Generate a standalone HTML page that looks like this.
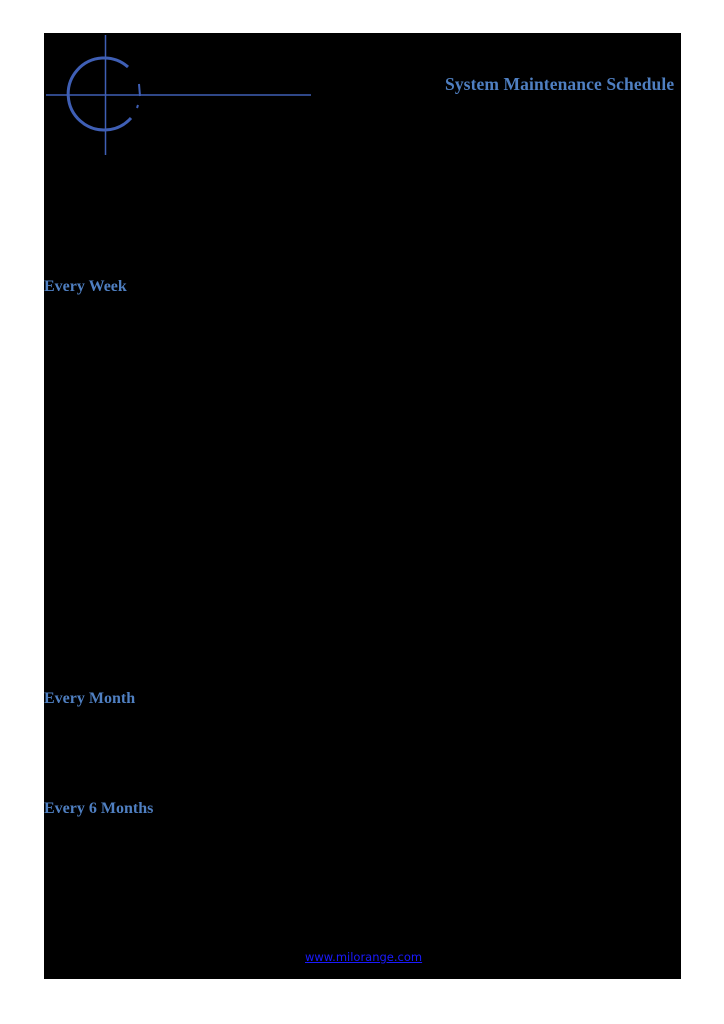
<!DOCTYPE html>
<html><head><style>
body{margin:0;background:#fff;width:724px;height:1024px;position:relative;overflow:hidden}
.bk{position:absolute;left:44px;top:33px;width:637px;height:946px;background:#000}
.h{position:absolute;color:#4f7fc1;font-family:"Liberation Serif",serif;font-weight:bold;font-size:16px;white-space:nowrap}
.l{position:absolute;left:305px;top:950px;color:#1a1aff;text-decoration:underline;font-family:"DejaVu Sans",sans-serif;font-size:11.5px}
</style></head><body>
<div class="bk"></div>
<svg style="position:absolute;left:0;top:0" width="724" height="200">
<line x1="105.5" y1="35" x2="105.5" y2="155" stroke="#3f5fb5" stroke-width="1.5"/>
<line x1="46" y1="95" x2="311" y2="95" stroke="#3f5fb5" stroke-width="1.5"/>
<path d="M128 67 A36 36 0 1 0 131 118" fill="none" stroke="#3f5fb5" stroke-width="3"/>
<path d="M139 84 L140 96 M138 105 L137 108" stroke="#3f5fb5" stroke-width="2"/>
</svg>
<div class="h" style="left:445px;top:74px;font-size:17.5px;letter-spacing:0.1px">System Maintenance Schedule</div>
<div class="h" style="left:44px;top:278px">Every Week</div>
<div class="h" style="left:44px;top:690px">Every Month</div>
<div class="h" style="left:44px;top:800px">Every 6 Months</div>
<div class="l">www.milorange.com</div>
</body></html>
